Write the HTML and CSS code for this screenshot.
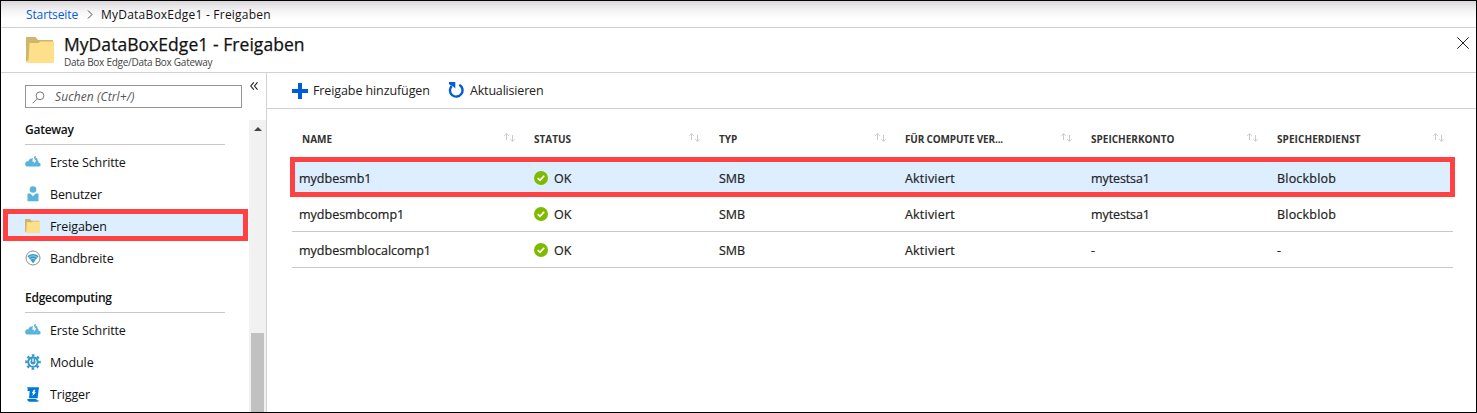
FILE: index.html
```html
<!DOCTYPE html>
<html lang="de">
<head>
<meta charset="utf-8">
<title>MyDataBoxEdge1 - Freigaben</title>
<link rel="stylesheet" href="styles.css">
</head>
<body>
<svg class="defs" aria-hidden="true">
  <symbol id="folder" viewBox="0 0 28 26"><path fill="#d0b56c" d="M0 0H9.500L12 3H27V25H0Z"/><path fill="#ffe08a" d="M3.500 6H12.500L14.500 4.500H28V25Q28 26 27 26H2Q0 26 0 24.500L2.500 23Z"/></symbol>
  <symbol id="cloud" viewBox="0 0 16 12"><path fill="#59b4d9" d="M3 10.500A2.700 2.700 0 0 1 .2 7.900 2.700 2.700 0 0 1 3.300 5.300Q4.200 2.200 8 2.200L7.300 5.800H9.300L8.600 8.300 11.400 4.300H9.600L10.400 1.400Q12.800 1.700 12.700 4.500 13.800 5.200 13.500 6.600 15.800 7 15.700 8.900 15.500 10.500 14 10.500Z"/><path fill="#59b4d9" d="M9 .5 11.200.2 10.500 2.400 9 2.800Z"/></symbol>
  <symbol id="user" viewBox="0 0 12 16"><circle cx="6" cy="3.500" r="3.300" fill="#59b4d9"/><path fill="#59b4d9" d="M.5 7.500H3.300L6 10.300 8.700 7.500H11.500V15.300H.5Z"/></symbol>
  <symbol id="wifi" viewBox="0 0 16 16"><circle cx="8" cy="8" r="7" fill="#fff" stroke="#8a8d90"/><path fill="#3999c6" d="M2.300 6Q8 1.800 13.700 6L8 13.300Z"/><path fill="none" stroke="#fff" stroke-width=".5" d="M3.500 7.500Q8 4.200 12.500 7.500M5 9.500Q8 7.400 11 9.500"/></symbol>
  <symbol id="gear" viewBox="0 0 16 16"><circle cx="8" cy="8" r="6.600" fill="none" stroke="#3999c6" stroke-width="2.400" stroke-dasharray="2.600 2.584" stroke-dashoffset="1.300"/><circle cx="8" cy="8" r="5.800" fill="#3999c6"/><path fill="none" stroke="#fff" stroke-width="1.200" d="M5.900 5.600A3.200 3.200 0 1 0 10.100 5.600M8 4.400V8"/></symbol>
  <symbol id="scroll" viewBox="0 0 14 15"><path fill="#0078d7" d="M1 .2H13L11.600 11.300H3L3.700 4H1.400Q2.400 2 1 .2ZM1.200 12H10.200Q10.300 13.500 13 13.500 12.500 14.800 11 14.800H3.500Q1.200 14.600 1.200 12Z"/><path fill="#fff" d="M7.800 2.800H9.300L8.500 5.200H10L6.300 9.300 7.200 6.300H5.800Z"/></symbol>
  <symbol id="ok" viewBox="0 0 14 14"><circle cx="7" cy="7" r="7" fill="#7fba00"/><path fill="none" stroke="#fff" stroke-width="1.700" d="M3.700 7.200 6 9.400 10.200 4.700"/></symbol>
  <symbol id="sort" viewBox="0 0 12 9"><path fill="none" stroke="#cacaca" d="M2.500 7V.7M.3 2.900 2.500.7 4.700 2.900M8.500 2V8.300M6.300 6.100 8.500 8.300 10.700 6.100"/></symbol>
</svg>
<div class="portal">
  <nav class="crumbs">
    <a class="crumb-home">Startseite</a>
    <svg class="crumb-sep" viewBox="0 0 6 9"><path fill="none" stroke="#444" d="M1 .5 5 4.500 1 8.500"/></svg>
    <span class="crumb-page">MyDataBoxEdge1 - Freigaben</span>
  </nav>
  <header class="head">
    <svg class="head-icon"><use href="#folder"/></svg>
    <div class="head-text">
      <h1 class="title"><span>MyDataBoxEdge1 - Freigaben</span></h1>
      <p class="subtitle"><span>Data Box Edge/Data Box Gateway</span></p>
    </div>
    <svg class="close" viewBox="0 0 12 12"><path stroke="#222" fill="none" d="M.3.3 11.700 11.700M11.700.3.3 11.700"/></svg>
  </header>
  <div class="body">
    <aside class="side">
      <div class="search-row">
        <div class="search">
          <svg class="lens" viewBox="0 0 13 13"><circle cx="8" cy="4.800" r="3.900" fill="none" stroke="#777"/><path stroke="#777" d="M5.200 7.600.7 12.200"/></svg>
          <span class="placeholder">Suchen (Ctrl+/)</span>
        </div>
        <svg class="collapse" viewBox="0 0 8 8"><path fill="none" stroke="#222" stroke-width="1.100" d="M3.800.3.800 4 3.800 7.700M7.500.3 4.500 4 7.500 7.700"/></svg>
      </div>
      <div class="side-scroll">
        <div class="menu">
          <h2 class="group"><span>Gateway</span></h2>
          <div class="item"><svg class="cloud"><use href="#cloud"/></svg><span>Erste Schritte</span></div>
          <div class="item"><svg class="user"><use href="#user"/></svg><span>Benutzer</span></div>
          <div class="item active"><svg class="folder"><use href="#folder"/></svg><span>Freigaben</span></div>
          <div class="item"><svg class="wifi"><use href="#wifi"/></svg><span>Bandbreite</span></div>
          <h2 class="group second"><span>Edgecomputing</span></h2>
          <div class="item"><svg class="cloud"><use href="#cloud"/></svg><span>Erste Schritte</span></div>
          <div class="item"><svg class="gear"><use href="#gear"/></svg><span>Module</span></div>
          <div class="item"><svg class="scroll"><use href="#scroll"/></svg><span>Trigger</span></div>
        </div>
        <div class="bar"><svg class="bar-up" viewBox="0 0 8 4"><path fill="#444" d="M0 4 4 0 8 4Z"/></svg><div class="thumb"></div></div>
      </div>
    </aside>
    <main class="main">
      <div class="tools">
        <svg class="plus" viewBox="0 0 16 16"><path fill="#015cda" d="M6 0H10V6H16V10H10V16H6V10H0V6H6Z"/></svg>
        <span class="add">Freigabe hinzufügen</span>
        <svg class="refresh" viewBox="0 0 16 16"><path fill="none" stroke="#015cda" stroke-width="2.400" d="M11.300 2.800A6.300 6.300 0 1 1 3.800 3.800"/><path fill="#015cda" d="M1 0H7.300V6.500L5.300 4.500 3 3.200 1 2.200Z"/></svg>
        <span class="reload">Aktualisieren</span>
      </div>
      <div class="table">
        <div class="row th">
          <div><span>NAME</span><svg class="sort"><use href="#sort"/></svg></div>
          <div><span>STATUS</span><svg class="sort"><use href="#sort"/></svg></div>
          <div><span>TYP</span><svg class="sort"><use href="#sort"/></svg></div>
          <div><span class="compute">FÜR COMPUTE VER...</span><svg class="sort"><use href="#sort"/></svg></div>
          <div><span>SPEICHERKONTO</span><svg class="sort"><use href="#sort"/></svg></div>
          <div><span class="service">SPEICHERDIENST</span><svg class="sort"><use href="#sort"/></svg></div>
        </div>
        <div class="row td selected"><div class="name"><span>mydbesmb1</span></div><div><svg class="ok"><use href="#ok"/></svg><span>OK</span></div><div><span>SMB</span></div><div><span class="wide">Aktiviert</span></div><div><span class="acct">mytestsa1</span></div><div><span class="wide">Blockblob</span></div></div>
        <div class="row td"><div class="name"><span>mydbesmbcomp1</span></div><div><svg class="ok"><use href="#ok"/></svg><span>OK</span></div><div><span>SMB</span></div><div><span class="wide">Aktiviert</span></div><div><span class="acct">mytestsa1</span></div><div><span class="wide">Blockblob</span></div></div>
        <div class="row td"><div class="name"><span>mydbesmblocalcomp1</span></div><div><svg class="ok"><use href="#ok"/></svg><span>OK</span></div><div><span>SMB</span></div><div><span class="wide">Aktiviert</span></div><div><span>-</span></div><div><span>-</span></div></div>
      </div>
    </main>
  </div>
</div>
</body>
</html>
```
FILE: styles.css
```css
* { box-sizing: border-box; }
body { margin: 0; font: 12.5px/18px "Open Sans", "Noto Sans", sans-serif; color: #111; background: #fff; }
svg { display: block; flex: none; }
h1, h2, p { margin: 0; font-weight: 400; }
span, a { white-space: nowrap; }
.defs { position: absolute; width: 0; height: 0; }
.portal { width: 1477px; height: 413px; border: 1px solid #000; display: flex; flex-direction: column; overflow: hidden; }

.crumbs { height: 27px; flex: none; display: flex; align-items: center; padding: 1px 0 0 25px; border-bottom: 1px solid #d2d2d2; background: linear-gradient(#d9d6da 0, #e5e3e6 4px, #f5f4f5 10px, #fff 18px); font-size: 12px; }
.crumb-home { color: #015cda; width: 61px; letter-spacing: -.12px; }
.crumb-sep { width: 6px; height: 9px; margin: -1px 8px 0 0; }
.crumb-page { letter-spacing: .22px; }

.head { height: 45px; flex: none; display: flex; padding: 0 7px 0 25px; border-bottom: 1px solid #d2d2d2; }
.head-icon { width: 28px; height: 26px; margin: 9px 10px 0 0; }
.head-text { flex: 1; }
.title { font-size: 17.5px; line-height: 24px; margin-top: 4px; letter-spacing: .05px; -webkit-text-stroke: .25px #111; }
.subtitle { font-size: 10px; line-height: 12px; color: #444; letter-spacing: -.27px; }
.close { width: 12px; height: 12px; margin-top: 9px; }

.body { flex: 1; display: flex; min-height: 0; }
.side { width: 266px; border-right: 1px solid #d2d2d2; display: flex; flex-direction: column; }
.search-row { height: 47px; flex: none; display: flex; padding: 12px 0 0 24px; }
.search { width: 217px; height: 23px; border: 1px solid #949494; display: flex; align-items: center; padding-left: 6px; }
.lens { width: 13px; height: 13px; margin: 2px 10px 0 0; }
.placeholder { font-style: italic; font-size: 12px; color: #555; letter-spacing: .1px; }
.collapse { width: 8px; height: 8px; margin: -3px 0 0 8px; }
.side-scroll { flex: 1; display: flex; justify-content: space-between; min-height: 0; }
.menu { width: 247px; }
.group { height: 25px; margin: 0 23px 2px 24px; border-bottom: 1px solid #c8c8c8; font-size: 12px; line-height: 20px; font-weight: 600; letter-spacing: -.25px; }
.group.second { margin-top: 13px; }
.item { height: 32px; display: flex; align-items: center; padding-left: 24px; letter-spacing: -.12px; }
.item svg { margin-top: -2px; }
.cloud { width: 16px; height: 12px; margin-right: 9px; }
.user { width: 12px; height: 16px; margin: 0 11px 0 2px; }
.folder { width: 15px; height: 14px; margin-right: 10px; }
.wifi, .gear { width: 16px; height: 16px; margin-right: 9px; }
.scroll { width: 14px; height: 15px; margin: 0 10px 0 1px; }
.item.active { margin: -2px 0 2px 2px; padding: 3px 0 0 17px; background: #dceeff; border: 5px solid #ff4141; }
.bar { width: 17px; background: #f1f1f1; display: flex; flex-direction: column; align-items: center; padding-top: 7px; }
.bar-up { width: 8px; height: 4px; }
.thumb { width: 13px; flex: 1; margin-top: 202px; background: #c1c1c1; }

.main { flex: 1; }
.tools { height: 36px; display: flex; align-items: center; padding-left: 25px; border-bottom: 1px solid #d2d2d2; color: #222; }
.tools span { padding-top: 1px; }
.plus { width: 16px; height: 16px; }
.add { margin-left: 5px; width: 135px; letter-spacing: -.1px; }
.refresh { width: 16px; height: 16px; margin-top: -2px; }
.reload { margin-left: 6px; letter-spacing: -.18px; }
.table { margin-top: 12px; padding-left: 25px; }
.row { display: grid; grid-template-columns: 232px 185px 186px 186px 186px 186px; width: 1161px; }
.row > div { display: flex; align-items: center; padding-left: 10px; }
.th { height: 39px; font-size: 10px; font-weight: 700; color: #333; }
.th > div { justify-content: space-between; padding-right: 8px; padding-bottom: 3px; }
.compute { letter-spacing: -.17px; }
.service { letter-spacing: .07px; }
.sort { width: 12px; height: 9px; margin-top: -4px; }
.td { height: 36px; border-bottom: 1px solid #c8c8c8; color: #222; -webkit-text-stroke: .2px #222; }
.td span { padding-top: 2px; }
.td > .name { padding-left: 7px; }
.td.selected { height: 36px; margin: -1px 0 1px; background: #dceeff; border-color: #dceeff; outline: 5px solid #ff4141; outline-offset: -3px; }
.td.selected > div { padding-top: 2px; }
.wide { letter-spacing: .2px; }
.acct { letter-spacing: -.1px; }
.ok { width: 14px; height: 14px; margin-right: 6px; -webkit-text-stroke: 0; }
```
